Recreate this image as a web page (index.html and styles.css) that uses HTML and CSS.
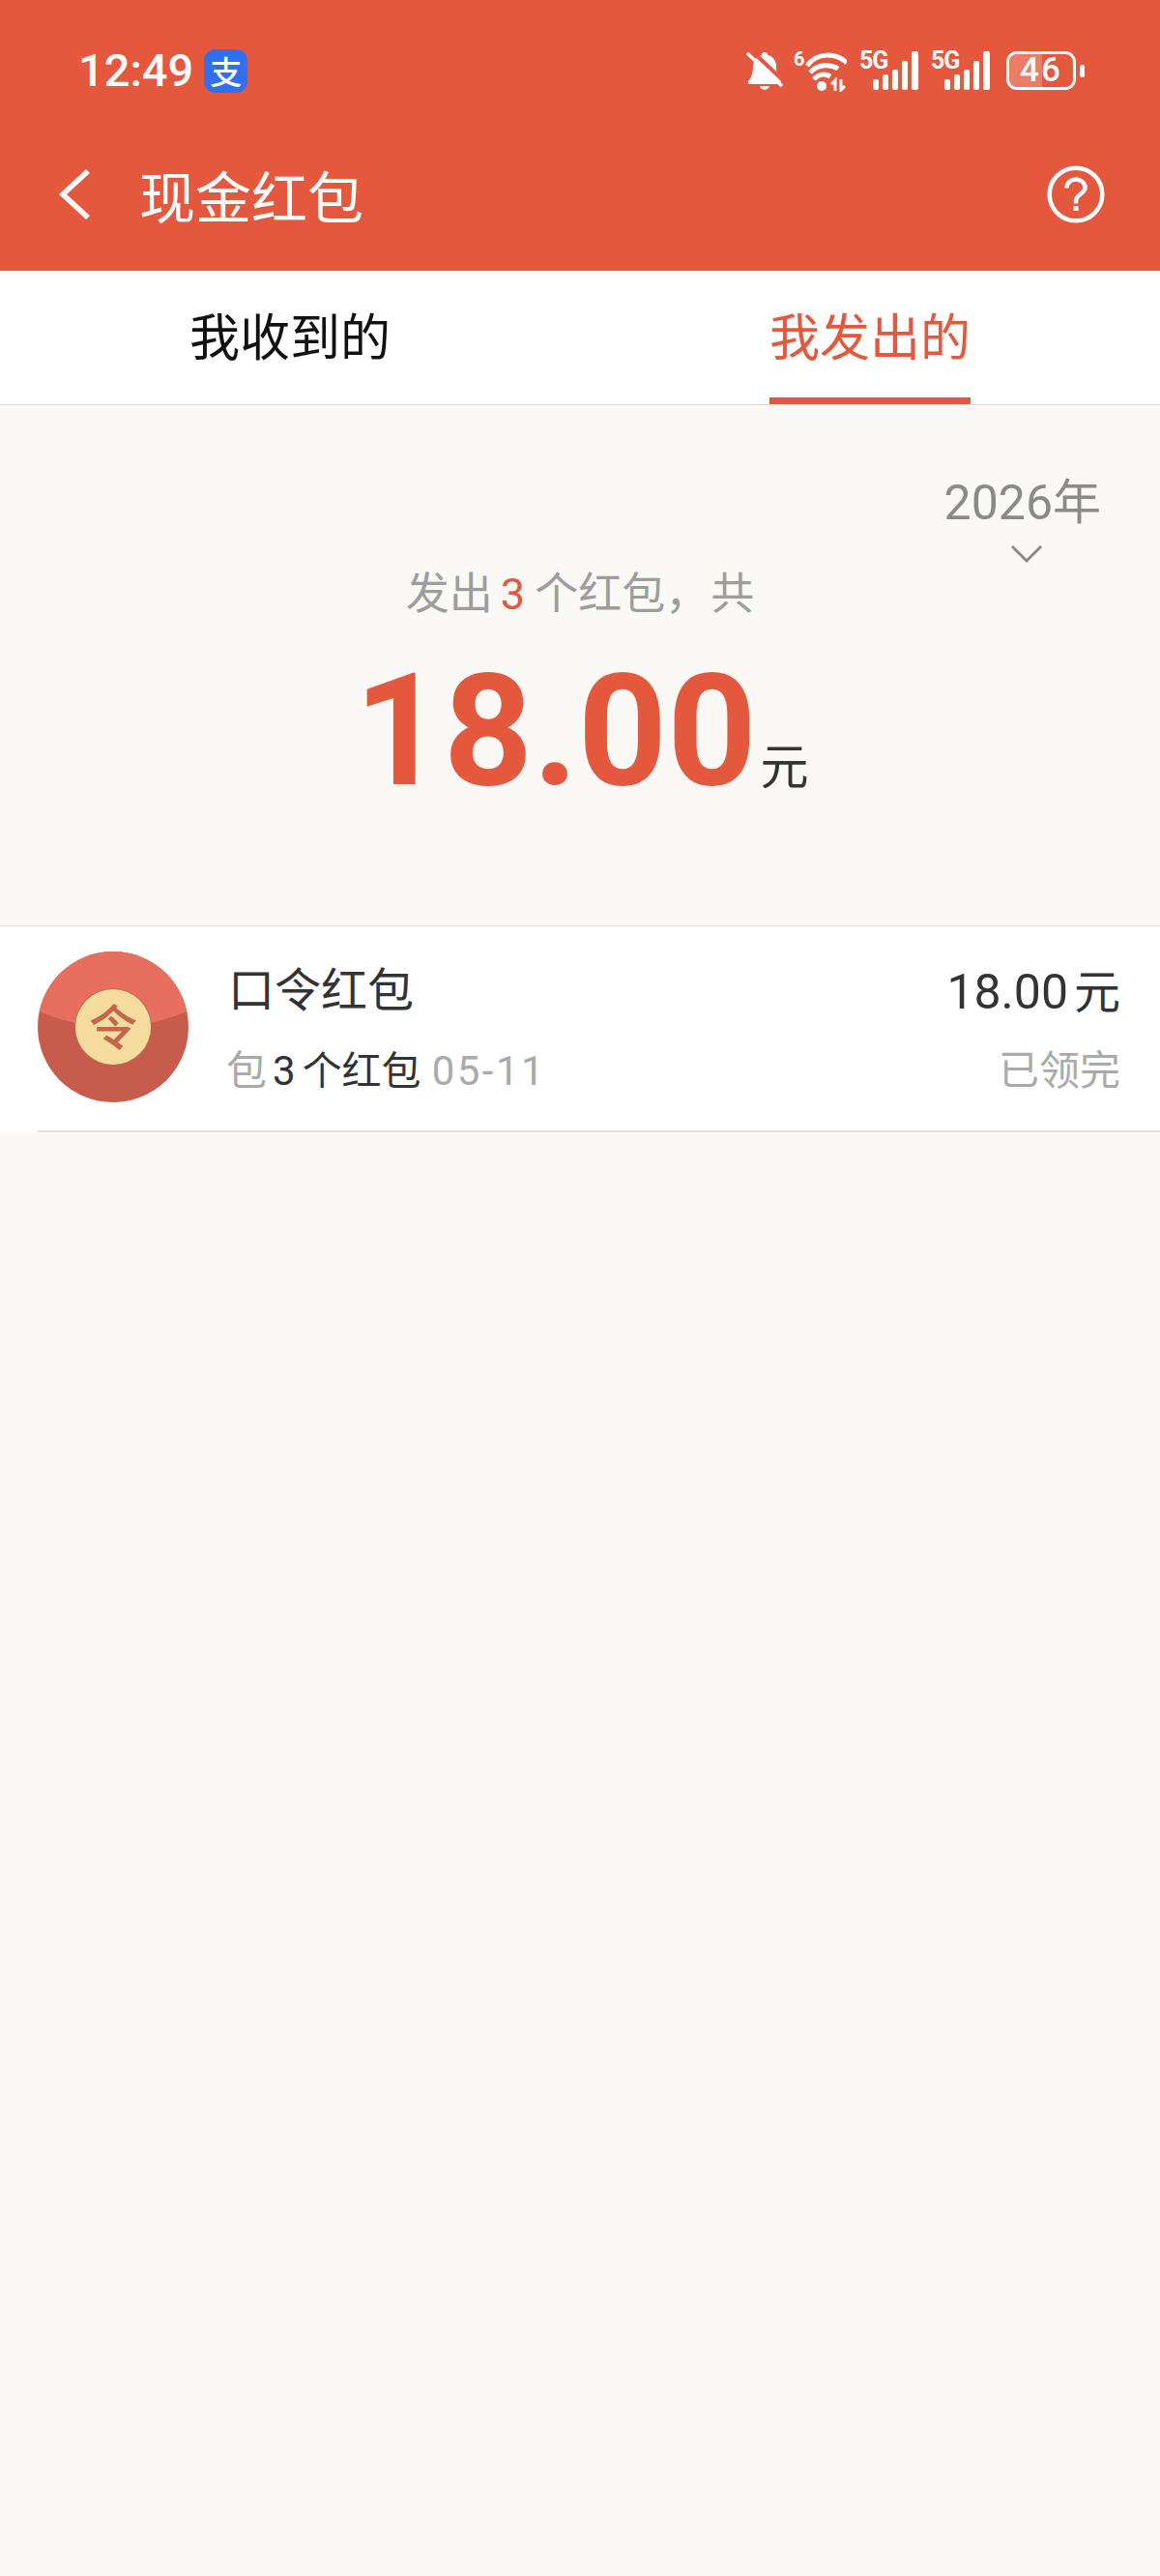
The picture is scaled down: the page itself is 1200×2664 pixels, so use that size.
FILE: index.html
```html
<!DOCTYPE html>
<html lang="zh-CN">
<head>
<meta charset="utf-8">
<title>现金红包</title>
<link rel="stylesheet" href="styles.css">
</head>
<body>
<div class="page">
  <header class="top">
    <div class="status">
      <div class="status-left">
        <span class="time">12:49</span>
        <span class="alipay">支</span>
      </div>
      <div class="status-right">
        <svg class="ic-bell" viewBox="0 0 39 43" width="39" height="43">
          <path d="M20 2c2 0 3 1 3 3 6 1 9 6 9 12 0 7 2 12 5 15v3H3v-3c3-3 5-8 5-15 0-6 3-11 9-12 0-2 1-3 3-3z" fill="#fff"/>
          <path d="M15 37h10c-1 5-9 5-10 0z" fill="#fff"/>
          <path d="M6 0l33 31" stroke="#e4583e" stroke-width="4" fill="none"/>
          <path d="M2 3l36 34" stroke="#fff" stroke-width="3.500" fill="none"/>
        </svg>
        <span class="wifi">
          <span class="wifi-six">6</span>
          <svg viewBox="0 0 55 43" width="55" height="43">
            <path d="M14 16C24 2 43 2 55 13" stroke="#fff" stroke-width="5" fill="none"/>
            <path d="M17 23c8-9 21-9 29-4" stroke="#fff" stroke-width="5" fill="none"/>
            <path d="M21 30c5-6 12-6 17-3" stroke="#fff" stroke-width="5" fill="none"/>
            <circle cx="29" cy="37" r="5" fill="#fff"/>
            <path d="M43 42V31l-4 4M49 30v11l4-4" stroke="#fff" stroke-width="3" fill="none"/>
          </svg>
        </span>
        <span class="cell">
          <span class="cell-label">5G</span>
          <span class="bars"><i class="b1"></i><i class="b2"></i><i class="b3"></i><i class="b4"></i><i class="b5"></i></span>
        </span>
        <span class="cell">
          <span class="cell-label">5G</span>
          <span class="bars"><i class="b1"></i><i class="b2"></i><i class="b3"></i><i class="b4"></i><i class="b5"></i></span>
        </span>
        <span class="battery">
          <span class="batt-body"><span class="batt-level" style="width:52%"></span><span class="batt-num">46</span></span>
          <span class="batt-nub"></span>
        </span>
      </div>
    </div>
    <nav class="navbar">
      <svg class="back" viewBox="0 0 34 52" width="34" height="52"><path d="M31 2L5 26l26 24" stroke="#fff" stroke-width="5.500" fill="none"/></svg>
      <h1 class="title">现金红包</h1>
      <svg class="help" viewBox="0 0 60 60" width="60" height="60">
        <circle cx="30" cy="30" r="27.300" stroke="#fff" stroke-width="4.500" fill="none"/>
        <path d="M20.500 23.500c0-5.500 4.500-9 9.500-9s9.500 3.500 9.500 8.500c0 6.500-9.500 7-9.500 13.500v3" stroke="#fff" stroke-width="4.500" fill="none"/>
        <rect x="27.500" y="42" width="5" height="5" fill="#fff"/>
      </svg>
    </nav>
  </header>

  <div class="tabs">
    <div class="tab">我收到的</div>
    <div class="tab tab-active"><span class="tab-label">我发出的</span></div>
  </div>

  <section class="summary">
    <div class="year">
      <span>2026年</span>
      <svg viewBox="0 0 34 20" width="34" height="20"><path d="M2 2l15 15L32 2" stroke="#8a8a8a" stroke-width="3" fill="none"/></svg>
    </div>
    <p class="count">发出<b>3</b>个红包<span class="comma">，</span>共</p>
    <p class="total"><span class="total-num">18.00</span><span class="total-unit">元</span></p>
  </section>

  <section class="list">
    <div class="row">
      <div class="packet">
        <div class="packet-flap"></div>
        <div class="packet-seal">令</div>
      </div>
      <div class="row-main">
        <div class="row-title">口令红包</div>
        <div class="row-sub">包<b>3</b><b class="cjk">个红包</b><span class="date">05-11</span></div>
      </div>
      <div class="row-side">
        <div class="row-amount">18.00<span class="unit">元</span></div>
        <div class="row-state">已领完</div>
      </div>
    </div>
  </section>
</div>
</body>
</html>
```
FILE: styles.css
```css
* { box-sizing: border-box; }
html, body { margin: 0; padding: 0; }
body {
  width: 1200px;
  height: 2664px;
  background: #fbf9f6;
  font-family: "Noto Sans CJK SC", Roboto, sans-serif;
  overflow: hidden;
}
.page { display: flex; flex-direction: column; }
.top { background: #e4583e; height: 280px; color: #fff; }
.status {
  height: 146px;
  padding: 0 78px 0 81px;
  display: flex;
  align-items: center;
  justify-content: space-between;
}
.status-left { display: flex; align-items: center; gap: 11px; }
.time {
  font-family: Roboto, sans-serif;
  font-size: 47px;
  font-weight: 500;
  line-height: 56px;
}
.alipay {
  width: 45px;
  height: 45px;
  border-radius: 12px;
  background: #2f6ff0;
  color: #fff;
  font-size: 33px;
  font-weight: 500;
  line-height: 45px;
  text-align: center;
}
.status-right { display: flex; align-items: center; height: 60px; }
.ic-bell { margin-right: 11px; }
.wifi { position: relative; display: flex; margin-right: 13px; height: 43px; }
.wifi-six {
  position: absolute; left: 0; top: -2px;
  font: 700 20px/22px Roboto, sans-serif;
}
.cell { position: relative; width: 61px; height: 40px; display: flex; justify-content: flex-end; margin-right: 13px; }
.cell-label {
  position: absolute; left: 0; top: -3px;
  font: 700 25px/26px Roboto, sans-serif;
  letter-spacing: -1px;
}
.bars { display: flex; align-items: flex-end; gap: 4px; }
.bars i { display: block; width: 6px; background: #fff; border-radius: 2px; }
.bars .b1 { height: 11px; }
.bars .b2 { height: 16px; }
.bars .b3 { height: 21px; }
.bars .b4 { height: 30px; }
.bars .b5 { height: 40px; width: 7px; }
.battery { display: flex; align-items: center; gap: 4px; margin-left: 4px; }
.batt-body {
  position: relative;
  display: block;
  width: 72px;
  height: 40px;
  border: 3.5px solid #fff;
  border-radius: 11px;
  overflow: hidden;
}
.batt-level { display: block; height: 100%; background: rgba(255,255,255,.22); }
.batt-num {
  position: absolute; inset: 0;
  font: 500 35px/33px Roboto, sans-serif;
  letter-spacing: 2px;
  text-align: center;
}
.batt-nub { width: 5px; height: 13px; background: #fff; border-radius: 3px; }
.navbar {
  height: 134px;
  padding: 0 57px 24px 60px;
  display: flex;
  align-items: center;
}
.back { margin-right: 50px; }
.title { margin: 0; flex: 1; font-size: 58px; font-weight: 400; line-height: 80px; }

.tabs {
  display: grid;
  grid-template-columns: 1fr 1fr;
  height: 139px;
  background: #fff;
  border-bottom: 1px solid #d9d7d4;
}
.tab {
  display: flex;
  justify-content: center;
  font-size: 52px;
  line-height: 131px;
  color: #111;
}
.tab-active { color: #e4583e; }
.tab-label { display: block; width: 208px; height: 138px; text-align: center; border-bottom: 7px solid #e4583e; white-space: nowrap; }

.summary { position: relative; height: 538px; padding-top: 160px; text-align: center; }
.year {
  position: absolute;
  top: 68px;
  right: 61px;
  display: flex;
  flex-direction: column;
  align-items: center;
  gap: 10px;
  color: #8a8a8a;
  font-family: Roboto, "Noto Sans CJK SC", sans-serif;
  font-size: 50px;
  line-height: 66px;
}
.year svg { margin-left: 8px; }
.count {
  margin: 0;
  color: #9d9d9d;
  font-size: 45px;
  line-height: 64px;
}
.count b { font-family: Roboto, sans-serif; font-weight: 400; color: #e4583e; margin: 0 10px 0 8px; }
.comma { margin-right: 2px; }
.total { margin: 14px 0 0; padding-left: 3px; display: flex; justify-content: center; align-items: baseline; }
.total-num {
  font-family: Roboto, sans-serif;
  font-weight: 700;
  font-size: 161px;
  line-height: 190px;
  color: #e4583e;
}
.total-unit { font-size: 50px; color: #333; margin-left: 4px; }

.list { background: #fff; border-top: 1px solid #e2e0dd; }
.row {
  position: relative;
  height: 213px;
  display: flex;
  align-items: center;
  padding: 0 41px 0 39px;
}
.row::after {
  content: "";
  position: absolute;
  left: 39px; right: 0; bottom: 0;
  height: 2px;
  background: #e2e0dd;
}
.packet {
  position: relative;
  width: 156px;
  height: 156px;
  border-radius: 50%;
  background: #c75c4d;
  overflow: hidden;
  margin-top: -5px;
  flex: none;
}
.packet-flap {
  position: absolute;
  left: -109px; top: -296px;
  width: 374px; height: 374px;
  border-radius: 50%;
  background: #e86e60;
}
.packet-seal {
  position: absolute;
  left: 39px; top: 39px;
  width: 78px; height: 78px;
  border-radius: 50%;
  background: #f4db9e;
  box-shadow: 0 0 0 1px #b9704f;
  color: #c4654c;
  font-size: 50px;
  font-weight: 500;
  line-height: 72px;
  text-align: center;
}
.row-main { flex: 1; margin: 16px 0 0 39px; }
.row-title { font-size: 48px; line-height: 64px; color: #333; margin: -22px 0 0 2px; }
.row-sub { font-size: 42px; line-height: 56px; margin-top: 24px; color: #aaa; display: flex; align-items: baseline; }
.row-sub b { font-weight: 400; color: #333; font-family: Roboto, sans-serif; margin-left: 6px; }
.row-sub .cjk { font-family: "Noto Sans CJK SC", sans-serif; font-size: 41px; margin-left: 7px; }
.date { font-family: Roboto, sans-serif; margin-left: 11px; letter-spacing: 2.5px; }
.row-side { text-align: right; margin-top: -6px; }
.row-amount { font-family: Roboto, sans-serif; font-size: 50px; line-height: 64px; color: #333; }
.unit { font-family: "Noto Sans CJK SC", sans-serif; font-size: 48px; margin-left: 6px; }
.row-state { font-size: 42px; line-height: 60px; margin-top: 16px; color: #aaa; }
```
